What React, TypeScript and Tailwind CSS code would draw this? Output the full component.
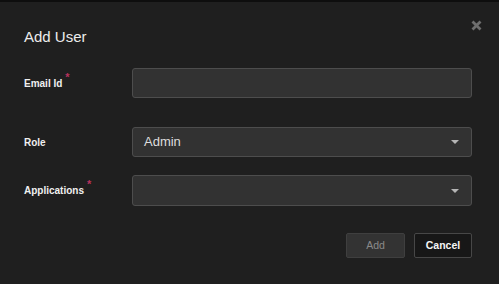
import React from "react";

function Caret() {
  return (
    <svg width="8" height="4" viewBox="0 0 8 4" className="shrink-0">
      <path d="M0 0 L8 0 L4 4 Z" fill="#b5b5b5" />
    </svg>
  );
}

function Req() {
  return <span className="ml-[3px] text-[11px] leading-none text-[#b8325c] relative top-[-4px]">*</span>;
}

export default function App() {
  return (
    <div className="w-[499px] h-[284px] bg-[#1f1f1f] border-t-2 border-[#0e0e0e] relative font-['Liberation_Sans',Arial,sans-serif]">
      <button className="absolute top-[18px] right-[17px] w-[11px] h-[11px] flex items-center justify-center">
        <svg width="11" height="11" viewBox="0 0 11 11">
          <path d="M1.5 1.5 L9.5 9.5 M9.5 1.5 L1.5 9.5" stroke="#6e6e6e" strokeWidth="2.8" strokeLinecap="butt" />
        </svg>
      </button>
      <div className="pt-[26px] px-[24px]">
        <h1 className="text-[15px] leading-[18px] text-[#ececec]">Add User</h1>
      </div>
      <div className="mt-[22px] pl-[24px] pr-[27px] flex flex-col">
        <div className="flex items-center h-[30px]">
          <label className="w-[108px] text-[10px] font-bold text-[#f0f0f0] flex items-start">
            Email Id<Req />
          </label>
          <div className="flex-1 h-full rounded-[3px] border border-[#4d4d4d] bg-[#323232]" />
        </div>
        <div className="flex items-center h-[30px] mt-[29px]">
          <label className="w-[108px] text-[10px] font-bold text-[#f0f0f0]">Role</label>
          <div className="flex-1 h-full rounded-[3px] border border-[#4d4d4d] bg-[#323232] flex items-center justify-between pl-[11px] pr-[12px]">
            <span className="text-[13px] text-[#dedede]">Admin</span>
            <Caret />
          </div>
        </div>
        <div className="flex items-center h-[31px] mt-[18px]">
          <label className="w-[108px] text-[10px] font-bold text-[#f0f0f0] flex items-start">
            Applications<Req />
          </label>
          <div className="flex-1 h-full rounded-[3px] border border-[#4d4d4d] bg-[#323232] flex items-center justify-end pr-[12px]">
            <Caret />
          </div>
        </div>
        <div className="flex justify-end gap-[9px] mt-[27px]">
          <button className="w-[59px] h-[25px] rounded-[2px] border border-[#3f3f3f] bg-[#333333] text-[10.5px] text-[#8a8a8a]">
            Add
          </button>
          <button className="w-[58px] h-[25px] rounded-[2px] border border-[#474747] bg-[#171717] text-[10.5px] font-bold text-[#f5f5f5]">
            Cancel
          </button>
        </div>
      </div>
    </div>
  );
}
